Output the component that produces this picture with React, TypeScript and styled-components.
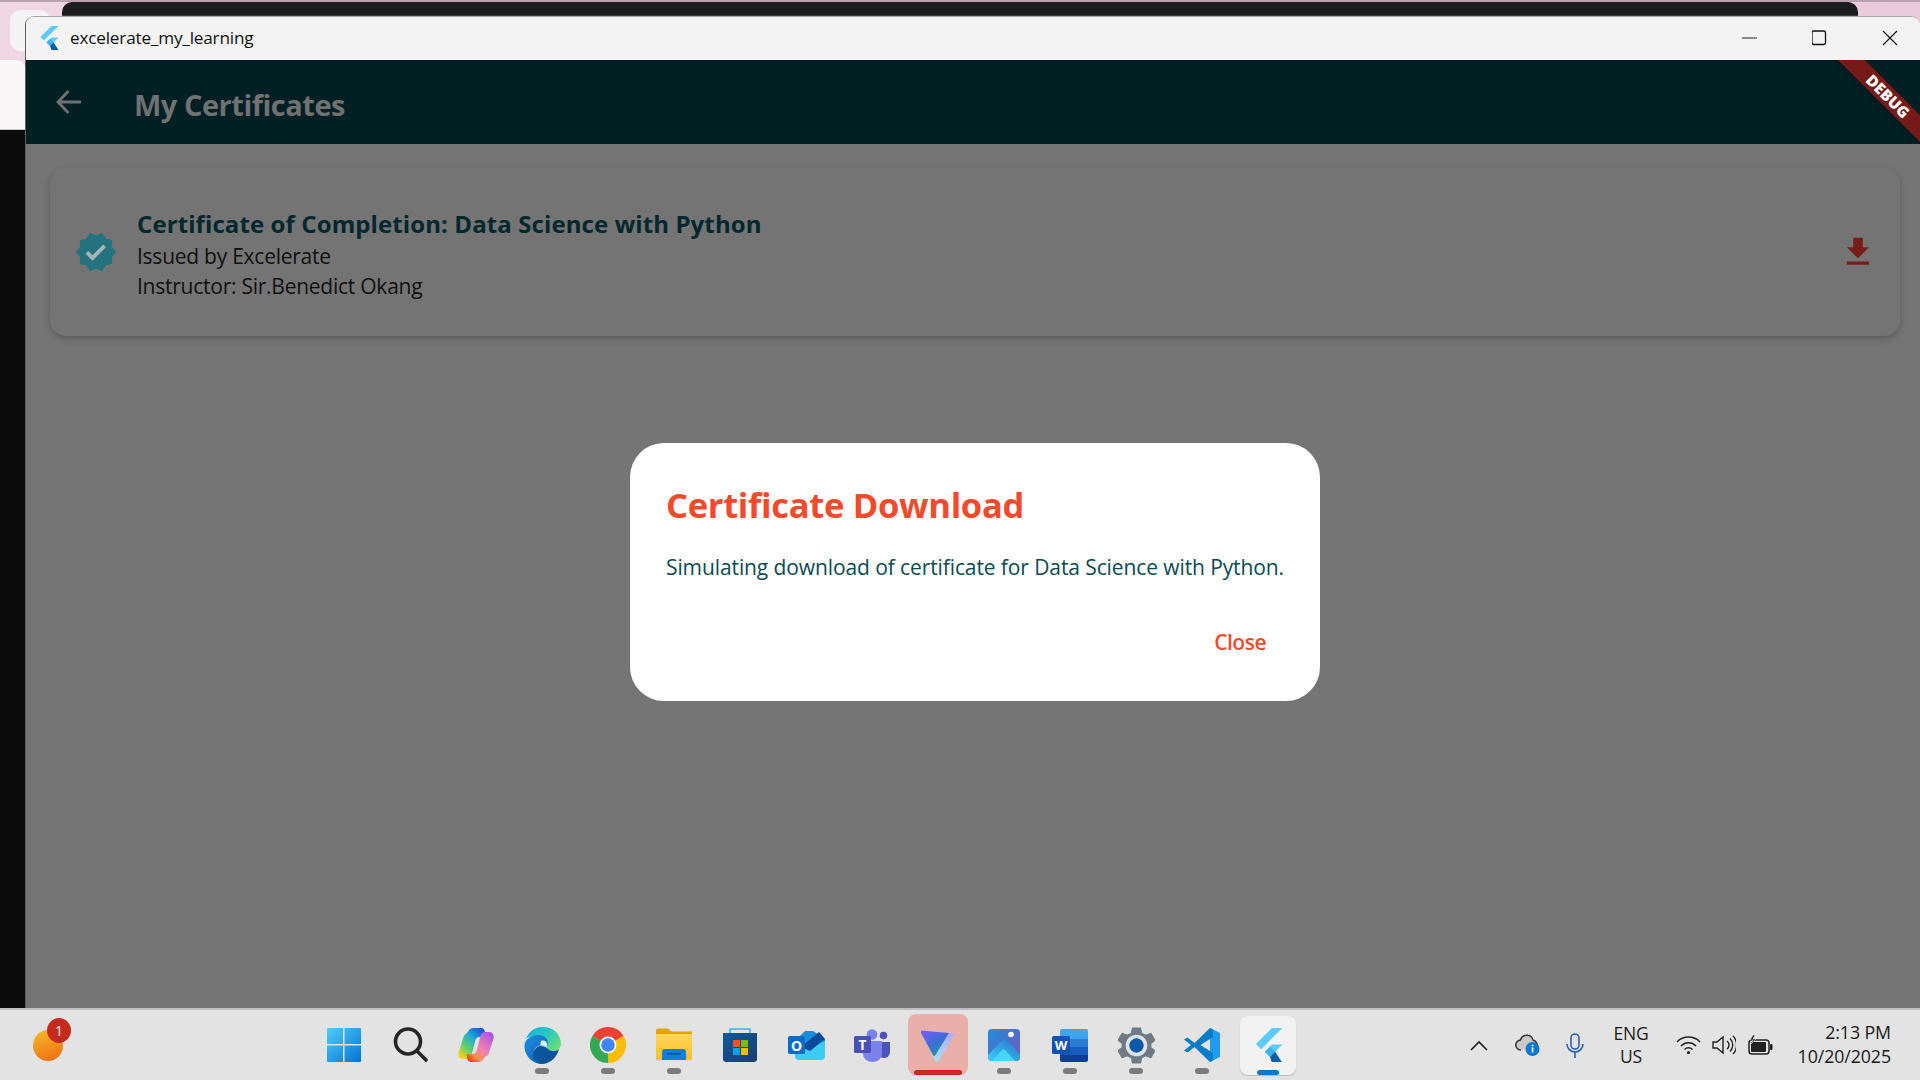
import React from "react";
import styled, { createGlobalStyle } from "styled-components";

const Global = createGlobalStyle`
  html, body { margin: 0; padding: 0; width: 1920px; height: 1080px; overflow: hidden; }
  body { font-family: "Open Sans", "Noto Sans", sans-serif; background: #efd6e3; }
  * { box-sizing: border-box; }
`;

const Desktop = styled.div`
  position: relative;
  width: 1920px;
  height: 1080px;
  display: flex;
  flex-direction: column;
  overflow: hidden;
  background: linear-gradient(90deg, #f0d7e4, #e9cbdb);
`;
const TopEdge = styled.div`
  position: absolute; left: 0; top: 0; width: 1920px; height: 2px; background: #b9a3af;
`;
const BackWindow = styled.div`
  position: absolute; left: 62px; top: 2px; width: 1796px; height: 15px;
  background: #1c1c1c; border-radius: 10px 10px 0 0;
  border-bottom: 2px solid #3d3d3d;
`;
const BackTile = styled.div`
  position: absolute; left: 10px; top: 10px; width: 40px; height: 41px;
  background: #f6f3f5; border-radius: 10px;
`;
const BackPanel = styled.div`
  position: absolute; left: 0; top: 60px; width: 26px; height: 70px;
  background: #f8f6f7; border-top-right-radius: 10px; border-bottom: 1px solid #c9c4c6;
`;
const BackDark = styled.div`
  position: absolute; left: 0; top: 130px; width: 26px; height: 880px; background: #0b0b0b;
`;
const AppWindow = styled.div`
  position: absolute; left: 25px; top: 16px; width: 1895px; height: 992px;
  display: flex; flex-direction: column;
  border-radius: 9px 9px 0 0;
  border-top: 1px solid #a9a6a7; border-left: 1px solid #5e5e5e;
  overflow: hidden;
`;
const TitleBar = styled.header`
  height: 43px; flex: none; background: #f3f3f3;
  display: flex; align-items: center; padding: 0 0 2px 13px; margin-right: -5px;
`;
const TitleText = styled.span`
  margin-left: 11px; flex: 1;
  font-size: 17.2px; color: #111; letter-spacing: -0.2px;
`;
const WinButton = styled.span`
  width: 70px; height: 41px; display: flex; align-items: center; justify-content: center;
`;
const AppBar = styled.div`
  position: relative; overflow: hidden;
  height: 84px; flex: none; background: #021f24;
  display: flex; align-items: center; padding: 0 0 0 30px;
`;
const AppTitle = styled.h1`
  margin: 5px 0 0 52px; font-size: 29px; font-weight: 700; color: #6f7172; letter-spacing: -0.48px;
`;
const Ribbon = styled.div`
  position: absolute; right: -43px; top: 27px; width: 150px; height: 18.5px;
  transform: rotate(45deg);
  background: #751a18;
  box-shadow: 0 2px 4px rgba(0,0,0,.25);
  display: flex; align-items: center; justify-content: center;
  color: #fff; font: 800 15.5px "Open Sans", sans-serif; letter-spacing: 0.1px;
`;
const Body = styled.main`
  position: relative; flex: 1; background: #757575; padding: 24px 20px 0 24px;
`;
const Card = styled.section`
  height: 168px; background: #747474; border-radius: 16px;
  box-shadow: 0 3px 7px rgba(0,0,0,.22);
  display: flex; align-items: center; padding: 0 23px 0 24px;
`;
const CardText = styled.div`
  flex: 1; margin-left: 19px; padding-top: 5px; display: flex; flex-direction: column;
`;
const CardTitle = styled.div`
  font-size: 24px; line-height: 32px; font-weight: 700; color: #02282e; letter-spacing: 0.1px;
  margin-bottom: 1px; white-space: nowrap;
`;
const CardLine = styled.div`
  font-size: 21px; line-height: 30px; color: #101010; letter-spacing: -0.25px; white-space: nowrap;
`;
const Overlay = styled.div`
  position: absolute; inset: 0; display: flex; align-items: center; justify-content: center;
  padding: 0 0 8px 4px;
`;
const Dialog = styled.div`
  width: 690px; height: 258px; background: #fff; border-radius: 34px;
  display: flex; flex-direction: column; padding: 41px 54px 0 36px;
`;
const DialogTitle = styled.h2`
  margin: 0; font-size: 34.5px; line-height: 42px; font-weight: 700; color: #f14a2d; letter-spacing: -0.3px; white-space: nowrap;
`;
const DialogText = styled.p`
  margin: 26px 0 0; font-size: 21px; line-height: 30px; color: #0b4a52; letter-spacing: -0.1px; white-space: nowrap;
`;
const CloseButton = styled.button`
  align-self: flex-end; margin-top: 45px; padding: 0; border: 0; background: none;
  font: 600 21px/30px "Open Sans", sans-serif; color: #f14a2d; letter-spacing: -0.5px;
`;
const Taskbar = styled.footer`
  position: absolute; left: 0; bottom: 0; width: 1920px; height: 72px;
  background: #e3e3e3; border-top: 2px solid #bfbfbf;
  display: grid; grid-template-columns: 311px 990px 1fr;
`;
const Widget = styled.div`
  position: relative; display: flex; align-items: center; padding: 0 0 0 33px;
`;
const WidgetSun = styled.div`
  width: 30px; height: 31px; margin-top: 1px; border-radius: 50%;
  background: linear-gradient(160deg, #f5bd2b, #f0690f);
`;
const WidgetBadge = styled.div`
  position: absolute; left: 47px; top: 8px; width: 24px; height: 25px; border-radius: 50%;
  background: #c42b1c; color: #fff; font-size: 14px; display: flex; align-items: center; justify-content: center;
`;
const Dock = styled.div`
  display: flex; align-items: flex-start;
`;
const DockCell = styled.div<{ $state?: "vpn" | "active" }>`
  position: relative; width: 66px; height: 70px; display: flex; align-items: center; justify-content: center;
  &::before {
    content: "";
    display: ${p => (p.$state ? "block" : "none")};
    position: absolute;
    left: ${p => (p.$state === "vpn" ? "3px" : "5px")};
    right: ${p => (p.$state === "vpn" ? "3px" : "5px")};
    top: ${p => (p.$state === "vpn" ? "4px" : "6px")};
    bottom: 5px;
    border-radius: 8px;
    background: ${p => (p.$state === "vpn" ? "#e9b0aa" : "#f2f2f2")};
    box-shadow: ${p => (p.$state === "active" ? "0 1px 1px rgba(0,0,0,.18)" : "none")};
  }
  svg { position: relative; }
`;
const DockDot = styled.span<{ $kind?: "vpn" | "active" }>`
  position: absolute; bottom: ${p => (p.$kind ? "5px" : "6px")}; left: 50%; transform: translateX(-50%);
  height: ${p => (p.$kind ? "5px" : "6px")};
  width: ${p => (p.$kind === "vpn" ? "48px" : p.$kind === "active" ? "22px" : "14px")};
  border-radius: 3px;
  background: ${p => (p.$kind === "vpn" ? "#c9281c" : p.$kind === "active" ? "#0a78d0" : "#7b7b7b")};
`;
const Tray = styled.div`
  display: flex; align-items: center; padding-left: 154px; color: #1a1a1a;
`;
const TrayIcon = styled.span<{ $w: number }>`
  width: ${p => p.$w}px; display: flex; justify-content: center; flex: none;
`;
const Lang = styled.div`
  width: 70px; flex: none; text-align: center; font-size: 17.5px; line-height: 23px; letter-spacing: -0.2px;
  margin-left: -2px;
`;
const Clock = styled.div`
  flex: 1; text-align: right; padding-right: 29px; font-size: 17.8px; line-height: 24px; letter-spacing: -0.1px;
  margin-left: -6px; margin-top: -2px;
`;

const Flutter = ({ s }: { s: number }) => (
  <svg width={s} height={s * 1.2} viewBox="0 0 21 25.200">
    <path d="M13 0h7.500L5.200 15.300 1.400 11.600z" fill="#5ccbfb" />
    <path d="M13 12h7.500L11.600 21 7.900 17.200z" fill="#5ccbfb" />
    <path d="M7.900 17.200 11.600 13.500 15.300 17.200 11.600 21z" fill="#39b2ec" />
    <path d="M11.600 21l3.700-3.800 5.200 8H13z" fill="#0a5fa8" />
  </svg>
);

const Icons: Record<string, React.ReactNode> = {
  windows: (
    <svg width="36" height="36" viewBox="0 0 36 36">
      <defs><linearGradient id="w" x1="0" y1="0" x2="1" y2="1"><stop offset="0" stopColor="#52cdfb"/><stop offset="1" stopColor="#0174d2"/></linearGradient></defs>
      <path d="M1 2a1 1 0 0 1 1-1h15v16H1zM18.500 1H34a1 1 0 0 1 1 1v15H18.500zM1 18.500h16V35H2a1 1 0 0 1-1-1zM18.500 18.500H35V34a1 1 0 0 1-1 1H18.500z" fill="url(#w)"/>
    </svg>
  ),
  search: (
    <svg width="36" height="38" viewBox="0 0 36 38" fill="none" stroke="#262626" strokeWidth="3.600" strokeLinecap="round">
      <circle cx="16" cy="15.500" r="12.500"/><path d="M25 25l9 9"/>
    </svg>
  ),
  copilot: (
    <svg width="36" height="34" viewBox="0 0 36 34">
      <defs>
        <linearGradient id="c1" x1=".8" y1="0" x2=".1" y2=".9"><stop offset="0" stopColor="#1a4fd8"/><stop offset=".35" stopColor="#1fa8d8"/><stop offset=".7" stopColor="#5ccf70"/><stop offset="1" stopColor="#eed21c"/></linearGradient>
        <linearGradient id="c2" x1=".9" y1=".1" x2=".2" y2="1"><stop offset="0" stopColor="#b055e8"/><stop offset=".5" stopColor="#f080b0"/><stop offset=".8" stopColor="#f8905a"/><stop offset="1" stopColor="#f2441f"/></linearGradient>
      </defs>
      <path d="M10 4c1-2.500 3-4 5.500-4H23c2 0 3.200 1 3.700 3l1.300 6h-6c-2.500 0-4 1-4.700 3.500L13.500 27c-.6 2.500-2.500 4-5 4H5c-3.500 0-5.500-3-4.500-6.500L5.500 9C6 7 8 6 10 4z" fill="url(#c1)"/>
      <path d="M26 30c-1 2.500-3 4-5.500 4H13c-2 0-3.200-1-3.700-3l-.8-5H14c2.500 0 4-1 4.700-3.500L22.500 8c.6-2.500 2.500-4 5-4H31c3.500 0 5.500 3 4.500 6.500L30.500 26c-.5 2-2.500 2-4.500 4z" fill="url(#c2)"/>
    </svg>
  ),
  edge: (
    <svg width="37" height="37" viewBox="0 0 37 37">
      <defs>
        <linearGradient id="e1" x1="0" y1="0" x2="1" y2=".8"><stop offset="0" stopColor="#12aee0"/><stop offset=".5" stopColor="#2cc8c0"/><stop offset="1" stopColor="#70e070"/></linearGradient>
        <linearGradient id="e2" x1="0" y1="0" x2=".8" y2="1"><stop offset="0" stopColor="#1e90e4"/><stop offset="1" stopColor="#0a62b8"/></linearGradient>
      </defs>
      <path d="M2 12C5 4 11 0 19 0c10 0 18 7 18 17 0 4-3 7-8 7-3 0-6-1-6-3 0-1 1-2 1-4 0-4-4-8-9-8C9 9 4 10 2 12z" fill="url(#e1)"/>
      <path d="M.5 18C1 12 8 8 15 8c5 0 9 4 9 8 0 2-1 3-1 4-6-3-12-1-13 4-1 6 2 10 8 13C8 37 0 28 .5 18z" fill="url(#e2)"/>
      <path d="M12 21c3-3 8-2 11 0 1 1.500 3 3 6 3 3 0 5-1 6-2-2 8-8 14-16 15-6 0-10-4-10-9 0-3 1-5 3-7z" fill="#0c559d"/>
      <path d="M17 14c2.500-1 5-.5 6 2.500.3 1 0 2.500-.5 3.500-1.500-1-3.500-1.800-6-1.600.2-1.500-.3-3.400.5-4.400z" fill="#dff3f3"/>
    </svg>
  ),
  chrome: (
    <svg width="36" height="36" viewBox="0 0 36 36">
      <path d="M18 18 2.400 9A18 18 0 0 1 33.600 9z" fill="#ea4335"/>
      <path d="M18 18 33.600 9A18 18 0 0 1 18 36z" fill="#fbbc04"/>
      <path d="M18 18 18 36A18 18 0 0 1 2.400 9z" fill="#34a853"/>
      <circle cx="18" cy="18" r="8.500" fill="#fff"/><circle cx="18" cy="18" r="6.800" fill="#4285f4"/>
    </svg>
  ),
  files: (
    <svg width="36" height="34" viewBox="0 0 36 34">
      <defs><linearGradient id="f1" x1="0" y1="0" x2="0" y2="1"><stop offset="0" stopColor="#ffd65c"/><stop offset="1" stopColor="#fbc02d"/></linearGradient></defs>
      <path d="M0 2.500A2 2 0 0 1 2 .5h9c2 0 3 3 5 3h20v28H0z" fill="#e3a300"/>
      <path d="M0 6h36v26H0z" fill="url(#f1)"/>
      <path d="M6 24a3 3 0 0 1 3-3h18a3 3 0 0 1 3 3v8H6z" fill="#0f7fd4"/>
      <rect x="11" y="25" width="14" height="1.500" fill="#0a4f8c"/>
    </svg>
  ),
  store: (
    <svg width="36" height="36" viewBox="0 0 36 36">
      <defs><linearGradient id="s1" x1="0" y1="0" x2="1" y2="1"><stop offset="0" stopColor="#0a5a9c"/><stop offset="1" stopColor="#1f3d6e"/></linearGradient></defs>
      <path d="M8 7V2h20v5" fill="none" stroke="#33b5ee" strokeWidth="1.600"/>
      <path d="M1 6h34v26a3 3 0 0 1-3 3H4a3 3 0 0 1-3-3z" fill="url(#s1)"/>
      <rect x="11" y="13" width="7" height="7" fill="#f25022"/><rect x="19" y="13" width="7" height="7" fill="#7fba00"/>
      <rect x="11" y="21" width="7" height="7" fill="#00a4ef"/><rect x="19" y="21" width="7" height="7" fill="#ffb900"/>
    </svg>
  ),
  outlook: (
    <svg width="37" height="32" viewBox="0 0 37 32">
      <path d="M7 24h30V10L25 2H17L7 12z" fill="#1690d9"/>
      <path d="M11 31a4 4 0 0 1-4-4V18l12 2 18-8v15a4 4 0 0 1-4 4z" fill="#3ccdf4"/>
      <path d="M13 18 31 3l6 7-15 12z" fill="#0a4a9e"/>
      <rect y="7" width="17" height="18" rx="1.500" fill="#0f6cc6"/>
      <text x="8.500" y="21.500" textAnchor="middle" fontFamily="Open Sans" fontSize="14" fontWeight="700" fill="#fff">O</text>
    </svg>
  ),
  teams: (
    <svg width="36" height="33" viewBox="0 0 36 33">
      <circle cx="29.500" cy="6.500" r="3.800" fill="#4c53bb"/>
      <path d="M24 13h12v10a6 6 0 0 1-12 0z" fill="#4c53bb"/>
      <circle cx="18" cy="5.500" r="5.300" fill="#7b83eb"/>
      <path d="M9 12h19v13a9.500 8 0 0 1-19 0z" fill="#7b83eb"/>
      <rect y="7" width="17" height="17" rx="1.500" fill="#4a50b5"/>
      <text x="8.500" y="21" textAnchor="middle" fontFamily="Open Sans" fontSize="13.500" fontWeight="700" fill="#fff">T</text>
    </svg>
  ),
  proton: (
    <svg width="36" height="33" viewBox="0 0 36 33">
      <defs>
        <linearGradient id="p1" x1="0" y1="0" x2=".6" y2="1"><stop offset="0" stopColor="#7a5cff"/><stop offset=".6" stopColor="#3a6fd0"/><stop offset="1" stopColor="#1f9aa8"/></linearGradient>
        <linearGradient id="p2" x1="1" y1="0" x2="0" y2="1"><stop offset="0" stopColor="#b5a5ff"/><stop offset="1" stopColor="#a6f0ee"/></linearGradient>
      </defs>
      <path d="M1 1.500 35 4.500 19 31c-1.500 2-3 2-4 0z" fill="url(#p2)"/>
      <path d="M1 1.500 29 4 15.500 26c-1 1.500-2 1.200-2.500 0L1 4z" fill="url(#p1)"/>
    </svg>
  ),
  photos: (
    <svg width="33" height="33" viewBox="0 0 33 33">
      <defs>
        <linearGradient id="ph" x1="0" y1="0" x2="1" y2="1"><stop offset="0" stopColor="#1d8ee0"/><stop offset="1" stopColor="#7a55b8"/></linearGradient>
        <linearGradient id="ph2" x1="0" y1="1" x2="1" y2="0"><stop offset="0" stopColor="#38d2f5"/><stop offset="1" stopColor="#2a6fd0"/></linearGradient>
      </defs>
      <rect width="32" height="32" rx="4" fill="url(#ph)"/>
      <circle cx="23" cy="5.500" r="2.800" fill="#fff"/>
      <path d="M0 26 15 10.500c1-1 2-1 3 0L32 25v3a4 4 0 0 1-4 4H4a4 4 0 0 1-4-4z" fill="url(#ph2)"/>
      <path d="M4 32 14 21c1-1 2-1 3 0l10 11z" fill="#47d8f5"/>
    </svg>
  ),
  word: (
    <svg width="36" height="33" viewBox="0 0 36 33">
      <path d="M8 2a2 2 0 0 1 2-2h24a2 2 0 0 1 2 2v8H8z" fill="#41a5ee"/>
      <rect x="8" y="10" width="28" height="8" fill="#2b7cd3"/>
      <rect x="8" y="18" width="28" height="8" fill="#185abd"/>
      <path d="M8 26h28v5a2 2 0 0 1-2 2H10a2 2 0 0 1-2-2z" fill="#103f91"/>
      <rect y="7" width="18" height="18" rx="1.500" fill="#1453b2"/>
      <text x="9" y="21" textAnchor="middle" fontFamily="Open Sans" fontSize="13" fontWeight="700" fill="#fff">W</text>
    </svg>
  ),
  settings: (
    <svg width="37" height="37" viewBox="0 0 36 36">
      <path d="M14 1h8l1 5 4 2 5-2 4 7-4 3v4l4 3-4 7-5-2-4 2-1 5h-8l-1-5-4-2-5 2-4-7 4-3v-4L0 13l4-7 5 2 4-2z" fill="#6f7a84" strokeLinejoin="round" stroke="#6f7a84" strokeWidth="1"/>
      <circle cx="18" cy="18" r="10.500" fill="#dfe3e6"/><circle cx="18" cy="18" r="7" fill="#0f5aa8"/>
    </svg>
  ),
  vscode: (
    <svg width="36" height="36" viewBox="0 0 36 36">
      <path d="M26 1 36 6v24l-10 5z" fill="#1f9cf0"/>
      <path d="M26 1 10.500 16 3.500 10.500 0 12.500 7 18l-7 5.500 3.500 2 7-5.500L26 35l3-1.500V26L16.500 18 29 10V2.500z" fill="#0a7cc7"/>
    </svg>
  ),
};

const dock: { k: string; dot?: boolean; state?: "vpn" | "active" }[] = [
  { k: "windows" }, { k: "search" }, { k: "copilot" }, { k: "edge", dot: true }, { k: "chrome", dot: true },
  { k: "files", dot: true }, { k: "store" }, { k: "outlook" }, { k: "teams" }, { k: "proton", state: "vpn" },
  { k: "photos", dot: true }, { k: "word", dot: true }, { k: "settings", dot: true }, { k: "vscode", dot: true },
  { k: "flutter", state: "active" },
];

export default function App() {
  return (
    <Desktop>
      <Global />
      <TopEdge />
      <BackWindow />
      <BackTile />
      <BackPanel />
      <BackDark />
      <AppWindow>
        <TitleBar>
          <Flutter s={20} />
          <TitleText>excelerate_my_learning</TitleText>
          <WinButton>
            <svg width="16" height="2" viewBox="0 0 16 2"><path d="M0 1h15" stroke="#222" strokeWidth="1.100"/></svg>
          </WinButton>
          <WinButton>
            <svg width="16" height="16" viewBox="0 0 16 16"><rect x="0" y="1" width="13.500" height="13.500" rx="1.800" fill="none" stroke="#111" strokeWidth="1.300"/></svg>
          </WinButton>
          <WinButton>
            <svg width="16" height="16" viewBox="0 0 16 16"><path d="M1 1l14 14M15 1 1 15" stroke="#111" strokeWidth="1.200"/></svg>
          </WinButton>
        </TitleBar>
        <AppBar>
          <svg width="26" height="26" viewBox="0 0 26 26" fill="none" stroke="#6f7172" strokeWidth="2.800">
            <path d="M25 13H3M12.500 2 2 13l10.500 11"/>
          </svg>
          <AppTitle>My Certificates</AppTitle>
          <Ribbon>DEBUG</Ribbon>
        </AppBar>
        <Body>
          <Card>
            <svg width="44" height="44" viewBox="0 0 24 24"><path fill="#25737f" d="M23 12l-2.440-2.790.34-3.690-3.610-.82-1.890-3.180L12 3 8.600 1.540 6.710 4.720l-3.610.81.34 3.680L1 12l2.440 2.790-.34 3.700 3.610.82L8.600 22.500 12 21l3.400 1.460 1.890-3.180 3.610-.82-.34-3.690L23 12z"/><path fill="#a9b2b4" d="M10.090 16.720l-3.800-3.810 1.480-1.480 2.320 2.330 5.850-5.870 1.480 1.480z"/></svg>
            <CardText>
              <CardTitle>Certificate of Completion: Data Science with Python</CardTitle>
              <CardLine>Issued by Excelerate</CardLine>
              <CardLine>Instructor: Sir.Benedict Okang</CardLine>
            </CardText>
            <svg width="38" height="38" viewBox="0 0 24 24"><path fill="#751d16" d="M19 9h-4V3H9v6H5l7 7 7-7zM5 18v2h14v-2H5z"/></svg>
          </Card>
          <Overlay>
            <Dialog>
              <DialogTitle>Certificate Download</DialogTitle>
              <DialogText>Simulating download of certificate for Data Science with Python.</DialogText>
              <CloseButton>Close</CloseButton>
            </Dialog>
          </Overlay>
        </Body>
      </AppWindow>
      <Taskbar>
        <Widget>
          <WidgetSun />
          <WidgetBadge>1</WidgetBadge>
        </Widget>
        <Dock>
          {dock.map(d => (
            <DockCell key={d.k} $state={d.state}>
              {d.k === "flutter" ? <Flutter s={29} /> : Icons[d.k]}
              {(d.dot || d.state) && <DockDot $kind={d.state} />}
            </DockCell>
          ))}
        </Dock>
        <Tray>
          <TrayIcon $w={47}>
            <svg width="18" height="11" viewBox="0 0 18 11" fill="none" stroke="#222" strokeWidth="1.700"><path d="M1 10l8-8 8 8"/></svg>
          </TrayIcon>
          <TrayIcon $w={50}>
            <svg width="25" height="22" viewBox="0 0 25 22">
              <path d="M6 16a5 5 0 0 1-.5-10A6.500 6.500 0 0 1 18 6a5 5 0 0 1 3 8" fill="#c9c9c9" stroke="#333" strokeWidth="1.500"/>
              <circle cx="17.500" cy="15" r="7" fill="#0a78d0"/>
              <rect x="16.700" y="13.500" width="1.700" height="5" fill="#fff"/><circle cx="17.500" cy="11.500" r="1.100" fill="#fff"/>
            </svg>
          </TrayIcon>
          <TrayIcon $w={46}>
            <svg width="18" height="25" viewBox="0 0 18 25" fill="none" stroke="#2a5fb5" strokeWidth="1.600"><rect x="5" y="1" width="8" height="15" rx="4"/><path d="M1 11a8 8 0 0 0 16 0M9 19v6"/></svg>
          </TrayIcon>
          <Lang>ENG<br />US</Lang>
          <TrayIcon $w={44}>
            <svg width="25" height="20" viewBox="0 0 25 20" fill="none" stroke="#222" strokeWidth="1.500"><path d="M1 7a16 16 0 0 1 23 0M5 11a10.500 10.500 0 0 1 15 0M8.500 14.500a5.500 5.500 0 0 1 8 0"/><circle cx="12.500" cy="17.500" r="1.600" fill="#222" stroke="none"/></svg>
          </TrayIcon>
          <TrayIcon $w={28}>
            <svg width="24" height="20" viewBox="0 0 24 20" fill="none" stroke="#222" strokeWidth="1.400"><path d="M1 7h4l6-5v16l-6-5H1zM15 6a5 5 0 0 1 0 8M18 3.500a9 9 0 0 1 0 13M21 1a13 13 0 0 1 0 18"/></svg>
          </TrayIcon>
          <TrayIcon $w={44}>
            <svg width="25" height="20" viewBox="0 0 25 20"><rect x="1" y="5" width="20" height="14" rx="3" fill="none" stroke="#222" strokeWidth="1.500"/><rect x="3" y="7" width="15" height="10" rx="1" fill="#222"/><rect x="22" y="9" width="2.500" height="6" rx="1" fill="#222"/><path d="M5 0 2 5h3L3 9l5-5H5l2-4z" fill="#222" stroke="#e3e3e3" strokeWidth=".6"/></svg>
          </TrayIcon>
          <Clock>2:13 PM<br />10/20/2025</Clock>
        </Tray>
      </Taskbar>
    </Desktop>
  );
}
